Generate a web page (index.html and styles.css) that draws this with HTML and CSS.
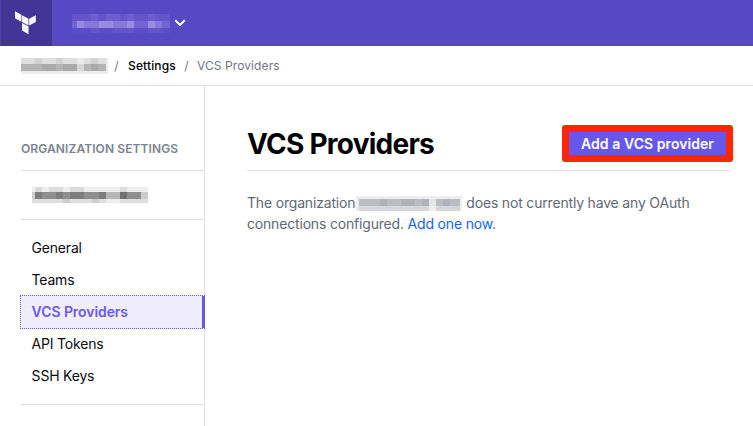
FILE: index.html
```
<!DOCTYPE html>
<html lang="en">
<head>
<meta charset="utf-8">
<title>VCS Providers</title>
<link rel="stylesheet" href="styles.css">
</head>
<body>
<header class="topbar">
  <a class="brand">
    <svg width="22" height="26" viewBox="0 0 22 26" fill="#fff"><path d="M0 1.2 6.4 4.8V11.8L0 8.2zM7.1 5.2 13.5 8.8V15.6L7.1 12zM14.2 8.8 20.8 5.2V11.9L14.2 15.6zM7.1 13 13.5 16.6V24.2L7.1 20.6z"/></svg>
  </a>
  <div class="org-menu">
    <svg class="mosaic" width="98" height="19" shape-rendering="crispEdges">
      <path fill="#6555cb" d="M0 0h98v19H0z"/>
      <path fill="#6d5fd0" d="M19 0h7v7h-7zM34 0h14v7H34zM55 0h7v7h-7zM76 0h7v7h-7z"/>
      <path fill="#5c4dc9" d="M0 14h19v5H0zM27 14h14v5H27zM62 14h14v5H62zM90 14h8v5h-8z"/>
      <path fill="#8578d7" d="M0 7h98v7H0z"/>
      <path fill="#988ce0" d="M5 7h7v7H5zM27 7h14v7H27zM55 7h7v7h-7zM76 7h7v7h-7z"/>
      <path fill="#7265d1" d="M0 7h5v7H0zM62 7h14v7H62zM90 7h8v7h-8z"/>
    </svg>
    <svg class="chevron" width="12" height="8" viewBox="0 0 12 8" fill="none" stroke="#fff" stroke-width="1.9"><path d="M1.2 1.3 6 6 10.8 1.3"/></svg>
  </div>
</header>
<nav class="crumbs">
  <svg class="mosaic" width="87" height="16" shape-rendering="crispEdges">
    <path fill="#dfdfdf" d="M0 0h85v6H0z"/>
    <path fill="#d2d2d2" d="M14 0h7v6h-7zM35 0h7v6h-7zM70 0h7v6h-7z"/>
    <path fill="#b4b4b4" d="M0 6h85v7H0z"/>
    <path fill="#a9a9a9" d="M21 6h14v7H21zM42 6h14v7H42zM70 6h7v7h-7z"/>
    <path fill="#d8d8d8" d="M56 6h7v7h-7z"/>
    <path fill="#ebebeb" d="M56 0h7v6h-7zM0 13h85v3H0zM85 0h2v16h-2z"/>
  </svg>
  <span class="slash">/</span><a class="crumb">Settings</a><span class="slash">/</span><span class="current">VCS Providers</span>
</nav>
<div class="layout">
  <aside class="sidebar">
    <h2 class="side-title">ORGANIZATION SETTINGS</h2>
    <div class="side-org">
      <svg class="mosaic" width="116" height="16" shape-rendering="crispEdges">
        <path fill="#eeeeee" d="M0 0h116v5H0z"/>
        <path fill="#dadada" d="M3 0h7v5H3zM17 0h14v5H17zM38 0h14v5H38zM88 0h7v5h-7z"/>
        <path fill="#8e8e8e" d="M0 5h116v7H0z"/>
        <path fill="#7d7d7d" d="M3 5h7v7H3zM24 5h7v7h-7zM38 5h14v7H38zM67 5h7v7h-7z"/>
        <path fill="#707070" d="M88 5h7v7h-7z"/>
        <path fill="#b6b6b6" d="M74 5h14v7H74z"/>
        <path fill="#cccccc" d="M0 5h3v7H0zM109 5h7v7h-7zM31 12h7v4h-7zM60 12h7v4h-7z"/>
        <path fill="#dedede" d="M0 12h31v4H0zM38 12h22v4H38zM67 12h7v4h-7zM88 12h28v4H88z"/>
        <path fill="#eeeeee" d="M74 12h14v4H74z"/>
      </svg>
    </div>
    <ul class="menu">
      <li>General</li>
      <li>Teams</li>
      <li class="active">VCS Providers</li>
      <li>API Tokens</li>
      <li>SSH Keys</li>
    </ul>
  </aside>
  <main class="content">
    <div class="heading">
      <h1>VCS Providers</h1>
      <button class="add">Add a VCS provider</button>
    </div>
    <p>The organization<svg class="mosaic inline" width="106" height="15" shape-rendering="crispEdges">
      <path fill="#ededee" d="M0 0h106v15H0z"/>
      <path fill="#babcc1" d="M3 3h101v7H3z"/>
      <path fill="#b0b2b8" d="M24 3h7v7h-7zM45 3h14v7H45zM66 3h7v7h-7zM87 3h7v7h-7z"/>
      <path fill="#d5d6d9" d="M3 10h70v5H3zM80 10h24v5H80z"/>
      <path fill="#e5e5e7" d="M73 3h7v7h-7z"/>
    </svg>does not currently have any OAuth<br>connections configured. <a class="link">Add one now</a>.</p>
  </main>
</div>
</body>
</html>
```
FILE: styles.css
```
* { box-sizing: border-box; }
body {
  margin: 0;
  height: 426px;
  display: flex;
  flex-direction: column;
  overflow: hidden;
  background: #fff;
  color: #0b0c0f;
  font: 14px/21px Inter, "Liberation Sans", sans-serif;
}
svg { display: block; flex: none; }
.topbar { display: flex; flex: none; height: 46px; background: #5748c6; }
.brand {
  width: 52px;
  padding: 10px 0 0 15px;
  background: #433597;
  border-left: 1px solid #5141ad;
}
.brand svg { margin-left: -1px; }
.org-menu { display: flex; align-items: flex-start; padding: 14px 0 0 20px; }
.chevron { margin: 5px 0 0 4px; }
.crumbs {
  display: flex;
  flex: none;
  align-items: center;
  height: 40px;
  padding-left: 21px;
  border-bottom: 1px solid #dfdfe6;
  font-size: 12px;
}
.slash { width: 21px; text-align: center; color: #6f7682; }
.slash:first-of-type { margin: 0 1px 0 -2px; }
.crumb { color: #000; font-weight: 500; letter-spacing: 0.14px; }
.current { color: #6f7682; letter-spacing: 0.1px; }
.layout { display: flex; flex: 1; }
.sidebar {
  width: 205px;
  padding-left: 21px;
  border-right: 1px solid #dfdfe6;
}
.side-title {
  height: 85px;
  margin: 0;
  padding-top: 53px;
  border-bottom: 1px solid #dfdfe6;
  color: #7c8391;
  font-size: 12px;
  line-height: 20px;
  font-weight: 600;
  letter-spacing: 0.1px;
  white-space: nowrap;
}
.side-org { height: 49px; padding: 16px 0 0 11px; border-bottom: 1px solid #dfdfe6; }
.menu {
  list-style: none;
  margin: 0;
  padding: 12px 0 12px;
  border-bottom: 1px solid #dfdfe6;
}
.menu li { height: 32px; padding-left: 10.6px; line-height: 32px; letter-spacing: -0.2px; }
.menu .active {
  height: 34px;
  margin: -1px -1px -1px -1px;
  border: 1px dotted #6858ea;
  border-right: 3px solid #6858ea;
  background: #f0eefc;
  color: #6858ea;
  font-weight: 600;
  letter-spacing: -0.07px;
}
.content { flex: 1; padding: 36px 23px 0 42px; }
.heading {
  display: flex;
  justify-content: space-between;
  height: 49px;
  border-bottom: 1px solid #dfdfe6;
}
h1 {
  margin: 0;
  color: #000;
  font-size: 28px;
  line-height: 45px;
  font-weight: 700;
  letter-spacing: -0.75px;
}
.add {
  width: 171px;
  height: 37px;
  margin: 3px -3px 0 0;
  padding: 0;
  border: 7px solid #ff2600;
  border-radius: 3px;
  background: #6858ea;
  color: #fff;
  font: 600 14px/23px Inter, "Liberation Sans", sans-serif;
  letter-spacing: 0.06px;
}
p { margin: 21px 0 0; color: #626873; letter-spacing: -0.18px; white-space: nowrap; }
.inline { display: inline-block; margin: 0 4px 0 1px; vertical-align: -3px; }
.link { color: #1563ff; }
```
